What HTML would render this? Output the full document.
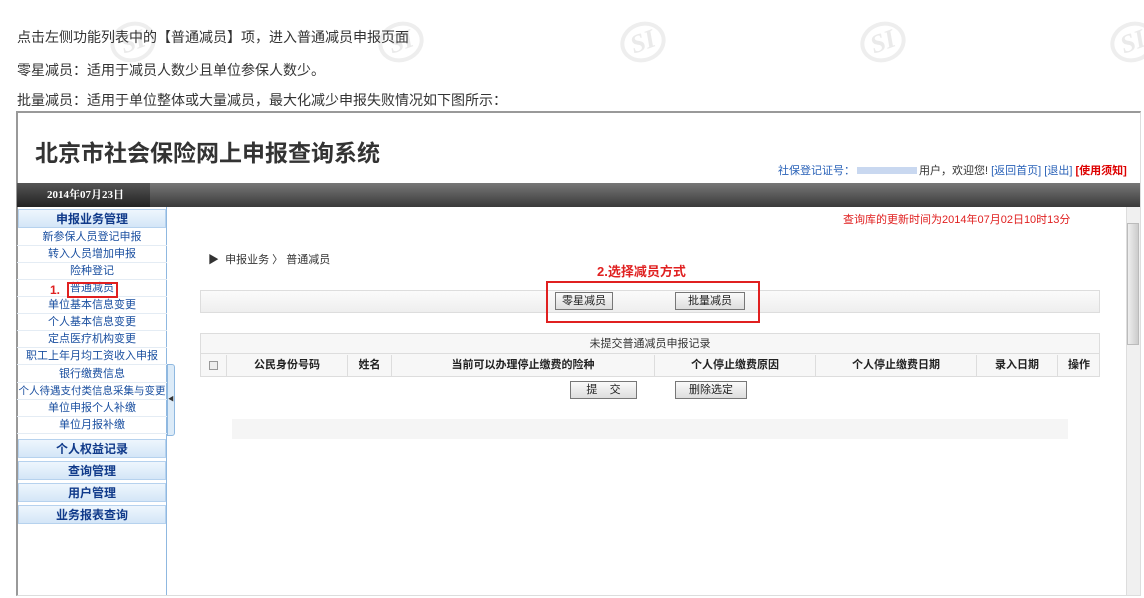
<!DOCTYPE html>
<html><head><meta charset="utf-8"><style>
*{margin:0;padding:0;box-sizing:border-box}
body{width:1144px;height:598px;background:#fff;position:relative;overflow:hidden;font-family:"Liberation Sans","Noto Sans CJK SC",sans-serif}
.a{position:absolute;white-space:nowrap}
.p{font-size:14px;color:#333;left:17px}
.wm{position:absolute;width:46px;height:40px;border:4px solid #eee;border-radius:50%;color:#eaeaea;font:italic bold 26px "Liberation Serif",serif;text-align:center;line-height:32px;transform:rotate(-20deg)}
.si{font-size:11px;color:#1a4fa0;text-align:center;width:150px;left:17px;height:17px;line-height:17px;border-bottom:1px solid #e4ecf4}
.sh{left:18px;width:148px;height:19px;line-height:19px;text-align:center;font-size:12px;font-weight:bold;color:#103a8a;background:linear-gradient(#eef6fd,#d4e6f7);border:1px solid #b6d2ee}
.btn{position:absolute;height:18px;border:1px solid #777;background:linear-gradient(#fafafa,#ddd);font-size:11px;text-align:center;line-height:16px;color:#222}
.th{position:absolute;top:355px;height:21px;line-height:21px;font-size:11px;font-weight:bold;text-align:center;border-right:1px solid #ddd;color:#222}
</style></head><body>
<div class="wm" style="left:110px;top:22px">SI</div>
<div class="wm" style="left:378px;top:22px">SI</div>
<div class="wm" style="left:620px;top:22px">SI</div>
<div class="wm" style="left:860px;top:22px">SI</div>
<div class="wm" style="left:1110px;top:22px">SI</div>
<div class="a p" style="top:27px">点击左侧功能列表中的【普通减员】项，进入普通减员申报页面</div>
<div class="a p" style="top:60px">零星减员：适用于减员人数少且单位参保人数少。</div>
<div class="a p" style="top:90px">批量减员：适用于单位整体或大量减员，最大化减少申报失败情况如下图所示：</div>

<div class="a" style="left:16px;top:111px;width:1125px;height:485px;border:2px solid #999;border-bottom:1px solid #ddd;border-right:1px solid #ddd"></div>
<div class="a" style="left:35px;top:134px;font-size:23px;font-weight:bold;color:#333">北京市社会保险网上申报查询系统</div>
<div class="a" style="left:778px;top:162px;font-size:11px;color:#2a62b8">社保登记证号：<span style="display:inline-block;width:60px;height:7px;background:#c9d8f0;margin:0 2px"></span><span style="color:#333">用户，欢迎您!</span> [返回首页] [退出] <span style="color:#d00;font-weight:bold">[使用须知]</span></div>
<div class="a" style="left:17px;top:183px;width:1123px;height:24px;background:linear-gradient(#777,#3a3a3a)"></div>
<div class="a" style="left:17px;top:183px;width:133px;height:24px;background:linear-gradient(#555,#222);color:#fff;font:bold 11px 'Liberation Serif','Noto Serif CJK SC',serif;line-height:24px;padding-left:30px">2014年07月23日</div>

<div class="a" style="left:166px;top:207px;width:1px;height:388px;background:#8fb8e0"></div>
<div class="a" style="left:167px;top:364px;width:8px;height:72px;background:#dcebf8;border:1px solid #8fb8e0;border-radius:0 3px 3px 0;font-size:6px;color:#333;line-height:70px">◀</div>
<div class="a sh" style="top:209px">申报业务管理</div>
<div class="a si" style="top:229px">新参保人员登记申报</div>
<div class="a si" style="top:246px">转入人员增加申报</div>
<div class="a si" style="top:263px">险种登记</div>
<div class="a si" style="top:280px">普通减员</div>
<div class="a" style="left:67px;top:282px;width:51px;height:16px;border:2px solid #e02020"></div>
<div class="a" style="left:50px;top:283px;font-size:12px;font-weight:bold;color:#e02020">1.</div>
<div class="a si" style="top:297px">单位基本信息变更</div>
<div class="a si" style="top:314px">个人基本信息变更</div>
<div class="a si" style="top:331px">定点医疗机构变更</div>
<div class="a si" style="top:348px">职工上年月均工资收入申报</div>
<div class="a si" style="top:366px">银行缴费信息</div>
<div class="a si" style="top:383px;font-size:10.5px">个人待遇支付类信息采集与变更</div>
<div class="a si" style="top:400px">单位申报个人补缴</div>
<div class="a si" style="top:417px">单位月报补缴</div>
<div class="a sh" style="top:439px">个人权益记录</div>
<div class="a sh" style="top:461px">查询管理</div>
<div class="a sh" style="top:483px">用户管理</div>
<div class="a sh" style="top:505px">业务报表查询</div>

<div class="a" style="left:843px;top:211px;font-size:11px;color:#e02020">查询库的更新时间为2014年07月02日10时13分</div>
<div class="a" style="left:1126px;top:207px;width:14px;height:388px;background:#f0f0f0;border-left:1px solid #ddd"></div>
<div class="a" style="left:1127px;top:223px;width:12px;height:122px;background:linear-gradient(90deg,#eee,#ccc);border:1px solid #bbb"></div>
<div class="a" style="left:208px;top:251px;font-size:11px;color:#333">▶&nbsp;&nbsp;申报业务 〉 普通减员</div>
<div class="a" style="left:597px;top:261px;font-size:13px;font-weight:bold;color:#e02020">2.选择减员方式</div>
<div class="a" style="left:200px;top:290px;width:900px;height:23px;background:linear-gradient(#fbfbfb,#eee);border:1px solid #ddd"></div>
<div class="btn" style="left:555px;top:292px;width:58px">零星减员</div>
<div class="btn" style="left:675px;top:292px;width:70px">批量减员</div>
<div class="a" style="left:546px;top:281px;width:214px;height:42px;border:2px solid #e02020"></div>

<div class="a" style="left:200px;top:333px;width:900px;height:44px;border:1px solid #ddd;background:#f7f7f7"></div>
<div class="a" style="left:200px;top:334px;width:900px;height:20px;line-height:20px;text-align:center;font-size:11px;color:#333;border-bottom:1px solid #ddd">未提交普通减员申报记录</div>
<div class="th" style="left:200px;width:27px"><span style="display:inline-block;width:9px;height:9px;border:1px solid #999;background:#eee;margin-top:6px"></span></div>
<div class="th" style="left:227px;width:121px">公民身份号码</div>
<div class="th" style="left:348px;width:44px">姓名</div>
<div class="th" style="left:392px;width:263px">当前可以办理停止缴费的险种</div>
<div class="th" style="left:655px;width:161px">个人停止缴费原因</div>
<div class="th" style="left:816px;width:161px">个人停止缴费日期</div>
<div class="th" style="left:977px;width:81px">录入日期</div>
<div class="th" style="left:1058px;width:42px;border:0">操作</div>
<div class="btn" style="left:570px;top:381px;width:67px">提&nbsp;&nbsp;&nbsp;&nbsp;交</div>
<div class="btn" style="left:675px;top:381px;width:72px">删除选定</div>
<div class="a" style="left:232px;top:419px;width:836px;height:20px;background:#f5f5f5"></div>
</body></html>
